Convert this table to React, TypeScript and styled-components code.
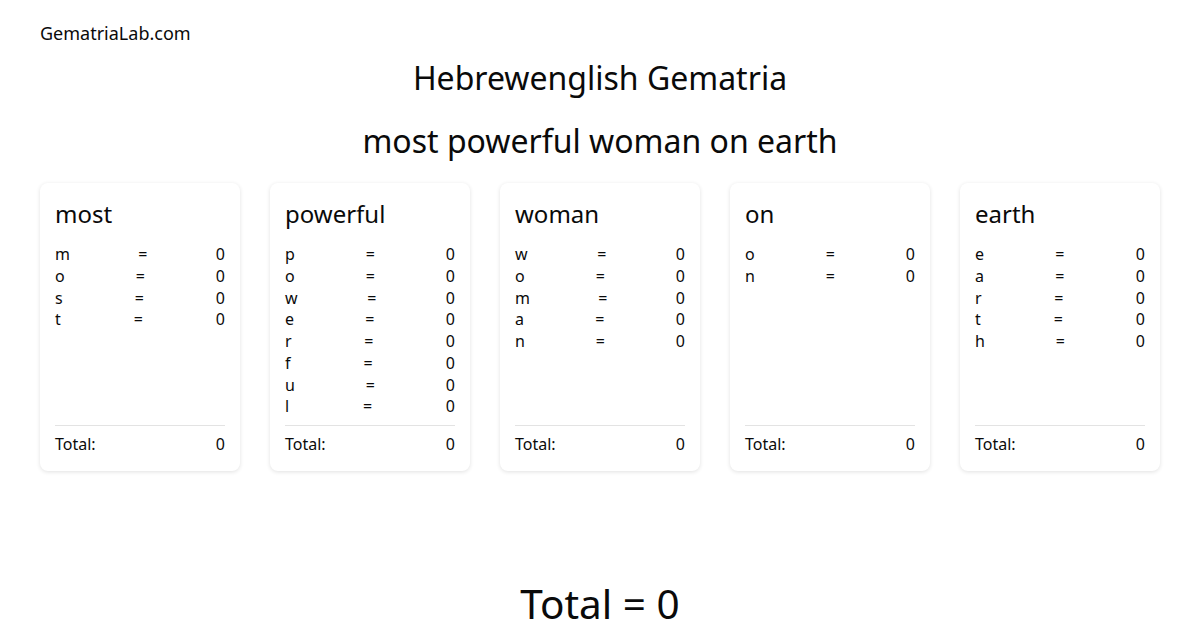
import React from "react";
import styled, { createGlobalStyle } from "styled-components";

const Global = createGlobalStyle`
  html, body { margin: 0; padding: 0; background: #ffffff; }
  body { font-family: "Noto Sans", "Open Sans", sans-serif; color: #0a0a0a; }
`;

const Page = styled.div`
  width: 1200px;
  height: 630px;
  box-sizing: border-box;
  padding: 20px 40px 0;
  display: flex;
  flex-direction: column;
  overflow: hidden;
`;

const Logo = styled.div`
  font-size: 18px;
  line-height: 26px;
`;

const Heading = styled.h1`
  margin: 10px 0 0;
  font-size: 32px;
  line-height: 44px;
  font-weight: 400;
  text-align: center;
`;

const Phrase = styled.h2`
  margin: 19px 0 0;
  font-size: 32px;
  line-height: 44px;
  font-weight: 400;
  text-align: center;
`;

const Cards = styled.div`
  margin-top: 20px;
  display: grid;
  grid-template-columns: repeat(5, 200px);
  column-gap: 30px;
  align-items: stretch;
`;

const Card = styled.div`
  background: #fff;
  border-radius: 8px;
  box-shadow: 0 1px 4px rgba(0, 0, 0, 0.12);
  padding: 15px;
  display: flex;
  flex-direction: column;
`;

const Word = styled.div`
  font-size: 24px;
  line-height: 32px;
`;

const Letters = styled.div`
  margin-top: 14px;
  flex: 1;
  display: flex;
  flex-direction: column;
`;

const Row = styled.div`
  display: flex;
  justify-content: space-between;
  font-size: 16px;
  line-height: 21.75px;
`;

const Footer = styled.div`
  margin-top: 7px;
  border-top: 1px solid #e3e3e3;
  padding-top: 8px;
  display: flex;
  justify-content: space-between;
  font-size: 16px;
  line-height: 21.75px;
`;

const GrandTotal = styled.div`
  margin-top: 108px;
  font-size: 40.5px;
  line-height: 50px;
  text-align: center;
`;

const words = ["most", "powerful", "woman", "on", "earth"];

export default function App() {
  return (
    <>
      <Global />
      <Page>
        <Logo>GematriaLab.com</Logo>
        <Heading>Hebrewenglish Gematria</Heading>
        <Phrase>most powerful woman on earth</Phrase>
        <Cards>
          {words.map((w) => (
            <Card key={w}>
              <Word>{w}</Word>
              <Letters>
                {w.split("").map((ch, i) => (
                  <Row key={i}>
                    <span>{ch}</span>
                    <span>=</span>
                    <span>0</span>
                  </Row>
                ))}
              </Letters>
              <Footer>
                <span>Total:</span>
                <span>0</span>
              </Footer>
            </Card>
          ))}
        </Cards>
        <GrandTotal>Total = 0</GrandTotal>
      </Page>
    </>
  );
}
